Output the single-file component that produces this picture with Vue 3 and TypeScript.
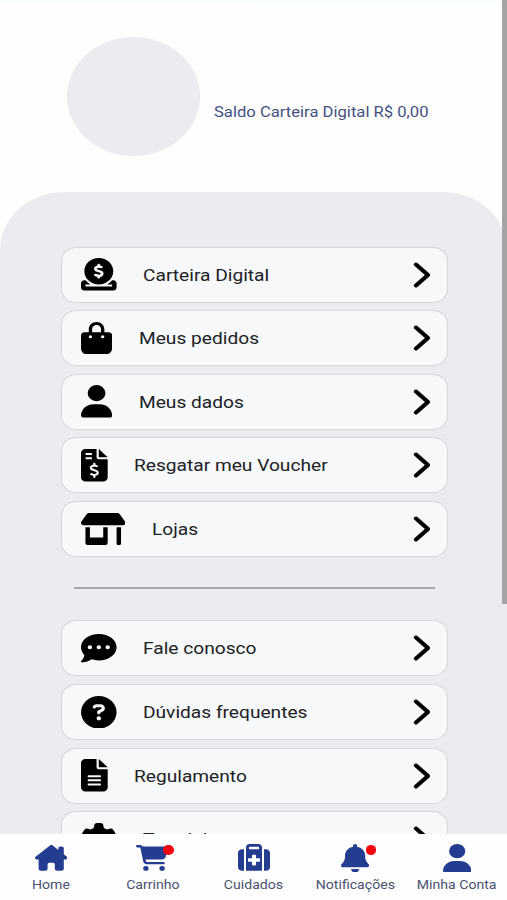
<script setup lang="ts">
interface Icon {
  w: number
  d: string
}

interface MenuEntry {
  label: string
  icon: Icon
  id: string
}

interface Tab {
  label: string
  icon: Icon
  width: number
  height: number
  badge?: boolean
}

const user: Icon = {
  w: 448,
  d: 'M224 256A128 128 0 1 0 224 0a128 128 0 1 0 0 256zm-45.7 48C79.8 304 0 383.8 0 482.3C0 498.7 13.3 512 29.7 512H418.3c16.4 0 29.7-13.3 29.7-29.7C448 383.8 368.2 304 269.7 304H178.3z',
}
const coin: Icon = {
  w: 512,
  d: 'M326.7 403.7c-22.1 8-45.9 12.3-70.7 12.3s-48.7-4.4-70.7-12.3c-.3-.1-.5-.2-.8-.3c-30-11-56.8-28.7-78.6-51.4C70 314.6 48 263.9 48 208C48 93.1 141.1 0 256 0S464 93.1 464 208c0 55.9-22 106.6-57.9 144c-1 1-2 2.1-3 3.1c-21.4 21.4-47.4 38.1-76.3 48.6zM256 91.9c-11.1 0-20.1 9-20.1 20.1v6c-5.6 1.2-10.9 2.9-15.9 5.1c-15 6.8-27.9 19.4-31.1 37.7c-1.8 10.2-.8 20 3.4 29c4.2 8.8 10.7 15 17.3 19.5c11.6 7.9 26.9 12.5 38.6 16l2.2 .7c13.9 4.2 23.4 7.4 29.3 11.7c2.5 1.8 3.4 3.2 3.7 4c.3 .8 .9 2.6 .2 6.7c-.6 3.5-2.5 6.4-8 8.8c-6.1 2.6-16 3.9-28.8 1.9c-6-1-16.7-4.6-26.2-7.9c-2.2-.7-4.3-1.5-6.4-2.1c-10.5-3.5-21.8 2.2-25.3 12.7s2.2 21.8 12.7 25.3c1.2 .4 2.7 .9 4.4 1.5c7.9 2.7 20.3 6.9 29.8 9.1V304c0 11.1 9 20.1 20.1 20.1s20.1-9 20.1-20.1v-5.5c5.3-1 10.5-2.5 15.4-4.6c15.7-6.7 28.4-19.7 31.6-38.7c1.8-10.4 1-20.3-3-29.4c-3.9-9-10.2-15.6-16.9-20.5c-12.2-8.8-28.3-13.7-40.4-17.4l-.8-.2c-14.2-4.3-23.8-7.3-29.9-11.4c-2.6-1.8-3.4-3-3.6-3.5c-.2-.3-.7-1.6-.1-5c.3-1.9 1.9-5.2 8.2-8.1c6.4-2.9 16.4-4.5 28.6-2.6c4.3 .7 17.9 3.3 21.7 4.3c10.7 2.8 21.6-3.5 24.5-14.2s-3.5-21.6-14.2-24.5c-4.4-1.2-14.4-3.2-21-4.4V112c0-11.1-9-20.1-20.1-20.1zM48 352H64c19.5 25.9 44 47.7 72.2 64H64v32H256 448V416H375.8c28.2-16.3 52.8-38.1 72.2-64h16c26.5 0 48 21.5 48 48v64c0 26.5-21.5 48-48 48H48c-26.5 0-48-21.5-48-48V400c0-26.5 21.5-48 48-48z',
}
const bag: Icon = {
  w: 448,
  d: 'M160 112c0-35.3 28.7-64 64-64s64 28.7 64 64v48H160V112zm-48 48H48c-26.5 0-48 21.5-48 48V416c0 53 43 96 96 96H352c53 0 96-43 96-96V208c0-26.5-21.5-48-48-48H336V112C336 50.1 285.9 0 224 0S112 50.1 112 112v48zm24 48a24 24 0 1 1 0 48 24 24 0 1 1 0-48zm152 24a24 24 0 1 1 48 0 24 24 0 1 1 -48 0z',
}
const sheet =
  'M64 0C28.7 0 0 28.7 0 64V448c0 35.3 28.7 64 64 64H320c35.3 0 64-28.7 64-64V160H256c-17.7 0-32-14.3-32-32V0H64zM256 0V128H384L256 0z'
const voucher: Icon = {
  w: 384,
  d: sheet + 'M64 80c0-8.8 7.2-16 16-16h64c8.8 0 16 7.2 16 16s-7.2 16-16 16H80c-8.8 0-16-7.2-16-16zm0 64c0-8.8 7.2-16 16-16h64c8.8 0 16 7.2 16 16s-7.2 16-16 16H80c-8.8 0-16-7.2-16-16zm128 72c8.8 0 16 7.2 16 16v17.3c8.5 1.2 16.7 3.1 24.1 5.1c8.5 2.3 13.6 11 11.3 19.6s-11 13.6-19.6 11.3c-11.1-3-22-5.2-32.1-5.3c-8.4-.1-17.4 1.8-23.6 5.5c-5.7 3.4-8.1 7.3-8.1 12.8c0 3.7 1.3 6.5 7.3 10.1c6.9 4.1 16.6 7.1 29.2 10.9l.5 .1c11.3 3.4 25.3 7.6 36.3 14.6c12.1 7.6 22.4 19.7 22.7 38.2c.3 19.3-9.6 33.3-22.9 41.6c-7.7 4.8-16.4 7.6-25.1 9.1V440c0 8.8-7.2 16-16 16s-16-7.2-16-16V422.2c-11.2-2.1-21.7-5.7-30.9-8.9c-2.1-.7-4.2-1.4-6.2-2.1c-8.4-2.8-12.9-11.9-10.1-20.2s11.9-12.9 20.2-10.1c2.5 .8 4.8 1.6 7.1 2.4c13.6 4.6 24.6 8.4 36.3 8.7c9.1 .3 17.9-1.7 23.7-5.3c5.1-3.2 7.9-7.3 7.8-14c-.1-4.6-1.8-7.8-7.7-11.6c-6.8-4.3-16.5-7.4-29-11.2l-1.6-.5c-11-3.3-24.3-7.3-34.8-13.7c-12-7.2-22.6-18.9-22.7-37.3c-.1-19.4 10.8-32.8 23.8-40.5c7.5-4.4 15.8-7.2 24.1-8.7V232c0-8.8 7.2-16 16-16z',
}
const fileLines: Icon = {
  w: 384,
  d: sheet + 'M112 256H272c8.8 0 16 7.2 16 16s-7.2 16-16 16H112c-8.8 0-16-7.2-16-16s7.2-16 16-16zm0 64H272c8.8 0 16 7.2 16 16s-7.2 16-16 16H112c-8.8 0-16-7.2-16-16s7.2-16 16-16zm0 64H272c8.8 0 16 7.2 16 16s-7.2 16-16 16H112c-8.8 0-16-7.2-16-16s7.2-16 16-16z',
}
const shop: Icon = {
  w: 640,
  d: 'M36.8 192H603.2c20.3 0 36.8-16.5 36.8-36.8c0-7.3-2.2-14.4-6.2-20.4L558.2 21.4C549.3 8 534.4 0 518.3 0H121.7c-16 0-31 8-39.9 21.4L6.2 134.7c-4 6.1-6.2 13.2-6.2 20.4C0 175.5 16.5 192 36.8 192zM64 224V384v80c0 26.5 21.5 48 48 48H336c26.5 0 48-21.5 48-48V384 224H320V384H128V224H64zm448 0V480c0 17.7 14.3 32 32 32s32-14.3 32-32V224H512z',
}
const comment: Icon = {
  w: 512,
  d: 'M256 448c141.4 0 256-93.1 256-208S397.4 32 256 32S0 125.1 0 240c0 45.1 17.7 86.8 47.7 120.9c-1.9 24.5-11.4 46.3-21.4 62.9c-5.5 9.2-11.1 16.6-15.2 21.6c-2.1 2.5-3.7 4.4-4.9 5.7c-.6 .6-1 1.1-1.3 1.4l-.3 .3c-4.6 4.6-5.9 11.4-3.4 17.4c2.5 6 8.3 9.9 14.8 9.9c28.7 0 57.6-8.9 81.6-19.3c22.9-10 42.4-21.9 54.3-30.6c31.8 11.5 67 17.9 104.1 17.9zM128 208a32 32 0 1 1 0 64 32 32 0 1 1 0-64zm128 0a32 32 0 1 1 0 64 32 32 0 1 1 0-64zm96 32a32 32 0 1 1 64 0 32 32 0 1 1 -64 0z',
}
const question: Icon = {
  w: 512,
  d: 'M256 512A256 256 0 1 0 256 0a256 256 0 1 0 0 512zM169.8 165.3c7.9-22.3 29.1-37.3 52.8-37.3h58.3c34.9 0 63.1 28.3 63.1 63.1c0 22.6-12.1 43.5-31.7 54.8L280 264.4c-.2 13-10.9 23.6-24 23.6c-13.3 0-24-10.7-24-24V250.5c0-8.6 4.6-16.5 12.1-20.8l44.3-25.4c4.7-2.7 7.6-7.7 7.6-13.1c0-8.4-6.8-15.1-15.1-15.1H222.6c-3.4 0-6.4 2.1-7.5 5.3l-.4 1.2c-4.4 12.5-18.2 19-30.6 14.6s-19-18.2-14.6-30.6l.4-1.2zM224 352a32 32 0 1 1 64 0 32 32 0 1 1 -64 0z',
}
const gear: Icon = {
  w: 512,
  d: 'M495.9 166.6c3.2 8.7 .5 18.4-6.4 24.6l-43.3 39.4c1.1 8.3 1.7 16.8 1.7 25.4s-.6 17.1-1.7 25.4l43.3 39.4c6.9 6.2 9.6 15.9 6.4 24.6c-4.4 11.9-9.7 23.3-15.8 34.3l-4.7 8.1c-6.6 11-14 21.4-22.1 31.2c-5.9 7.2-15.7 9.6-24.5 6.8l-55.7-17.7c-13.4 10.3-28.2 18.9-44 25.4l-12.5 57.1c-2 9.1-9 16.3-18.2 17.8c-13.8 2.3-28 3.5-42.5 3.5s-28.7-1.2-42.5-3.5c-9.2-1.5-16.2-8.7-18.2-17.8l-12.5-57.1c-15.8-6.5-30.6-15.1-44-25.4L83.1 425.9c-8.8 2.8-18.6 .3-24.5-6.8c-8.1-9.8-15.5-20.2-22.1-31.2l-4.7-8.1c-6.1-11-11.4-22.4-15.8-34.3c-3.2-8.7-.5-18.4 6.4-24.6l43.3-39.4C64.6 273.1 64 264.6 64 256s.6-17.1 1.7-25.4L22.4 191.2c-6.9-6.2-9.6-15.9-6.4-24.6c4.4-11.9 9.7-23.3 15.8-34.3l4.7-8.1c6.6-11 14-21.4 22.1-31.2c5.9-7.2 15.7-9.6 24.5-6.8l55.7 17.7c13.4-10.3 28.2-18.9 44-25.4l12.5-57.1c2-9.1 9-16.3 18.2-17.8C227.3 1.2 241.5 0 256 0s28.7 1.2 42.5 3.5c9.2 1.5 16.2 8.7 18.2 17.8l12.5 57.1c15.8 6.5 30.6 15.1 44 25.4l55.7-17.7c8.8-2.8 18.6-.3 24.5 6.8c8.1 9.8 15.5 20.2 22.1 31.2l4.7 8.1c6.1 11 11.4 22.4 15.8 34.3zM256 336a80 80 0 1 0 0-160 80 80 0 1 0 0 160z',
}
const house: Icon = {
  w: 576,
  d: 'M575.8 255.5c0 18-15 32.1-32 32.1h-32l.7 160.2c0 2.7-.2 5.4-.5 8.1V472c0 22.1-17.9 40-40 40H456c-1.1 0-2.2 0-3.3-.1c-1.4 .1-2.8 .1-4.2 .1H416 392c-22.1 0-40-17.9-40-40V448 384c0-17.7-14.3-32-32-32H256c-17.7 0-32 14.3-32 32v64 24c0 22.1-17.9 40-40 40H160 128.1c-1.5 0-3-.1-4.5-.2c-1.2 .1-2.4 .2-3.6 .2H104c-22.1 0-40-17.9-40-40V360c0-.9 0-1.9 .1-2.8V287.6H32c-18 0-32-14-32-32.1c0-9 3-17 10-24L266.4 8c7-7 15-8 22-8s15 2 21 7L416 100.7V64c0-17.7 14.3-32 32-32h32c17.7 0 32 14.3 32 32V185l52.8 46.4c8 7 12 15 11 24z',
}
const cart: Icon = {
  w: 576,
  d: 'M0 24C0 10.7 10.7 0 24 0H69.5c22 0 41.5 12.8 50.6 32h411c26.3 0 45.5 25 38.6 50.4l-41 152.3c-8.5 31.4-37 53.3-69.5 53.3H170.7l5.4 28.5c2.2 11.3 12.1 19.5 23.6 19.5H488c13.3 0 24 10.7 24 24s-10.7 24-24 24H199.7c-34.6 0-64.3-24.6-70.7-58.5L77.4 54.5c-.7-3.8-4-6.5-7.9-6.5H24C10.7 48 0 37.3 0 24zM128 464a48 48 0 1 1 96 0 48 48 0 1 1 -96 0zm336-48a48 48 0 1 1 0 96 48 48 0 1 1 0-96z',
}
const suitcase: Icon = {
  w: 512,
  d: 'M184 48H328c4.4 0 8 3.6 8 8V96H176V56c0-4.4 3.6-8 8-8zm-56 8V96v32V480H384V128 96 56c0-30.9-25.1-56-56-56H184c-30.9 0-56 25.1-56 56zM96 96H64C28.7 96 0 124.7 0 160V416c0 35.3 28.7 64 64 64H96V96zM416 480h32c35.3 0 64-28.7 64-64V160c0-35.3-28.7-64-64-64H416V480zM224 208c0-8.8 7.2-16 16-16h32c8.8 0 16 7.2 16 16v48h48c8.8 0 16 7.2 16 16v32c0 8.8-7.2 16-16 16H288v48c0 8.8-7.2 16-16 16H240c-8.8 0-16-7.2-16-16V320H176c-8.8 0-16-7.2-16-16V272c0-8.8 7.2-16 16-16h48V208z',
}
const bell: Icon = {
  w: 448,
  d: 'M224 0c-17.7 0-32 14.3-32 32V51.2C119 66 64 130.6 64 208v18.8c0 47-17.3 92.4-48.5 127.6l-7.4 8.3c-8.4 9.4-10.4 22.9-5.3 34.4S19.4 416 32 416H416c12.6 0 24-7.4 29.2-18.9s3.1-25-5.3-34.4l-7.4-8.3C401.3 319.2 384 273.9 384 226.8V208c0-77.4-55-142-128-156.8V32c0-17.7-14.3-32-32-32zm45.3 493.3c12-12 18.7-28.3 18.7-45.3H224 160c0 17 6.7 33.3 18.7 45.3s28.3 18.7 45.3 18.7s33.3-6.7 45.3-18.7z',
}
const chevron =
  'M310.6 233.4c12.5 12.5 12.5 32.8 0 45.3l-192 192c-12.5 12.5-32.8 12.5-45.3 0s-12.5-32.8 0-45.3L242.7 256 73.4 86.6c-12.5-12.5-12.5-32.8 0-45.3s32.8-12.5 45.3 0l192 192z'

const groups: MenuEntry[][] = [
  [
    { id: 'wallet', label: 'Carteira Digital', icon: coin },
    { id: 'orders', label: 'Meus pedidos', icon: bag },
    { id: 'profile', label: 'Meus dados', icon: user },
    { id: 'voucher', label: 'Resgatar meu Voucher', icon: voucher },
    { id: 'stores', label: 'Lojas', icon: shop },
  ],
  [
    { id: 'contact', label: 'Fale conosco', icon: comment },
    { id: 'faq', label: 'Dúvidas frequentes', icon: question },
    { id: 'rules', label: 'Regulamento', icon: fileLines },
    { id: 'tutorial', label: 'Tutorial', icon: gear },
  ],
]

const tabs: Tab[] = [
  { label: 'Home', icon: house, width: 32.4, height: 25.8 },
  { label: 'Carrinho', icon: cart, width: 32.4, height: 25.8, badge: true },
  { label: 'Cuidados', icon: suitcase, width: 32, height: 28.6 },
  { label: 'Notificações', icon: bell, width: 28.2, height: 28.6, badge: true },
  { label: 'Minha Conta', icon: user, width: 28.4, height: 28.6 },
]

// Menu icons are 32px tall and slightly wider than their natural ratio.
const menuIconWidth = (icon: Icon): number => icon.w * 0.0695
</script>

<template>
  <div class="screen">
    <main class="content">
      <header class="profile">
        <div class="avatar"></div>
        <p class="balance"><span class="wide">Saldo Carteira Digital R$ 0,00</span></p>
      </header>
      <section class="panel">
        <template v-for="(group, g) in groups" :key="g">
          <hr v-if="g > 0" class="divider" />
          <nav class="group">
            <a v-for="entry in group" :key="entry.id" class="card">
              <svg
                class="card-icon"
                :width="menuIconWidth(entry.icon)"
                height="32.5"
                :viewBox="`0 0 ${entry.icon.w} 512`"
                preserveAspectRatio="none"
              >
                <path :d="entry.icon.d" fill-rule="evenodd" />
              </svg>
              <span class="card-label wide">{{ entry.label }}</span>
              <svg class="chevron" viewBox="0 0 320 512" preserveAspectRatio="none">
                <path :d="chevron" />
              </svg>
            </a>
          </nav>
        </template>
      </section>
    </main>
    <nav class="tabs">
      <a v-for="tab in tabs" :key="tab.label" class="tab">
        <span class="tab-icon">
          <svg
            :width="tab.width"
            :height="tab.height"
            :viewBox="`0 0 ${tab.icon.w} 512`"
            preserveAspectRatio="none"
          >
            <path :d="tab.icon.d" fill-rule="evenodd" />
          </svg>
          <i v-if="tab.badge" class="badge"></i>
        </span>
        <span class="tab-label">{{ tab.label }}</span>
      </a>
    </nav>
    <div class="scrollbar"></div>
  </div>
</template>

<style>
body {
  margin: 0;
  background: #fefefe;
}
</style>

<style scoped>
.screen {
  position: relative;
  display: flex;
  flex-direction: column;
  width: 507px;
  height: 900px;
  overflow: hidden;
  background: linear-gradient(#f8fbff 0, #fefefe 6px);
  font-family: Roboto, 'Liberation Sans', sans-serif;
}

.content {
  flex: 1;
  min-height: 0;
  overflow: hidden;
}

.wide {
  display: inline-block;
  transform: scaleX(1.108);
  transform-origin: left center;
  white-space: nowrap;
}

.profile {
  display: flex;
  align-items: center;
  box-sizing: border-box;
  height: 192px;
  padding-left: 67px;
}

.avatar {
  width: 133px;
  height: 119px;
  border-radius: 50%;
  background: #ebecef;
}

.balance {
  margin: 31px 0 0 13.5px;
  font-size: 15px;
  line-height: 20px;
  color: #465181;
}

.panel {
  box-sizing: border-box;
  min-height: 760px;
  padding: 54.5px 59px 0 61px;
  border-radius: 64px 64px 0 0 / 58px 58px 0 0;
  background: #ebecef;
}

.group {
  display: flex;
  flex-direction: column;
  gap: 7.6px;
}

.card {
  display: flex;
  align-items: center;
  box-sizing: border-box;
  height: 56px;
  padding: 0 17.5px 0 19px;
  border: 1px solid #d5d7db;
  border-radius: 15px / 14px;
  background: #f6f8fa;
}

.card-icon {
  flex: none;
  fill: #000;
}

.card-label {
  flex: 1;
  margin-left: 26.4px;
  font-size: 17.3px;
  line-height: 24px;
  color: #202124;
}

.chevron {
  flex: none;
  width: 20px;
  height: 28px;
  fill: #000;
  stroke: #000;
  stroke-width: 8;
}

.divider {
  height: 1.5px;
  margin: 30.6px 13px 31.4px;
  border: 0;
  background: #a4a6aa;
}

.tabs {
  display: grid;
  grid-template-columns: repeat(5, 1fr);
  flex: none;
  height: 66.5px;
  background: #fefefe;
}

.tab {
  display: flex;
  flex-direction: column;
  align-items: center;
  padding-left: 0.8px;
  padding-top: 10px;
}

.tab-icon {
  position: relative;
  display: flex;
  align-items: center;
  height: 28.6px;
}

.tab-icon svg {
  fill: #243d91;
}

.badge {
  position: absolute;
  top: 1.5px;
  right: -7px;
  width: 10.5px;
  height: 9.5px;
  border-radius: 50%;
  background: #f5000c;
}

.tab:nth-child(2) .badge {
  right: -5px;
}

.tab-label {
  margin-top: 5.2px;
  font-size: 12.6px;
  line-height: 16px;
  color: #4a5270;
  white-space: nowrap;
  transform: scaleX(1.12);
}

.scrollbar {
  position: absolute;
  top: 0;
  right: 0;
  width: 5px;
  height: 604px;
  background: #a3a4a5;
}
</style>
